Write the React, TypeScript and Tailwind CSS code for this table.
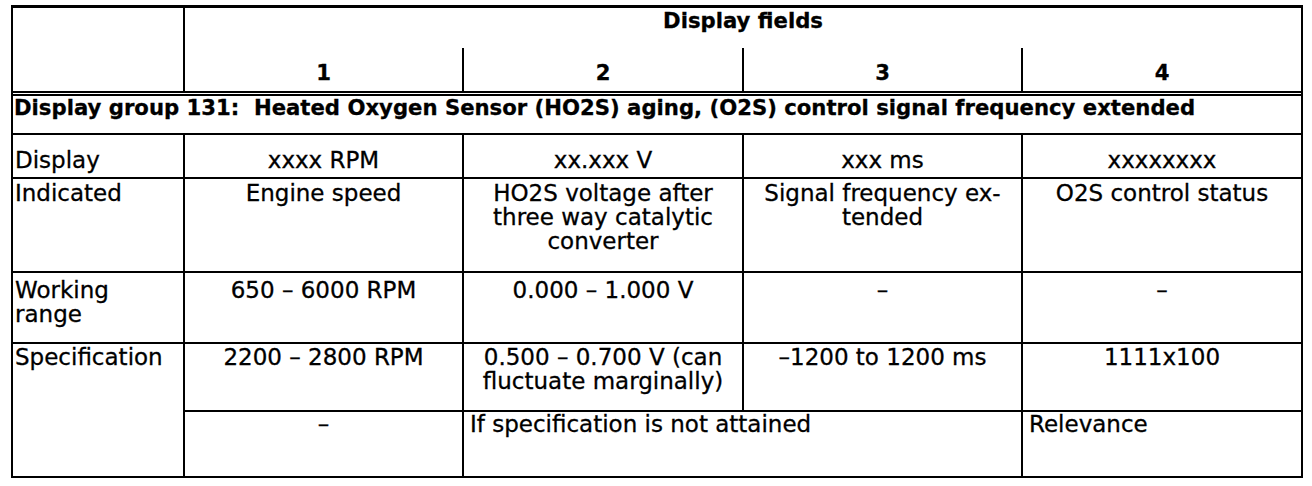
import type {ReactNode} from 'react'

const cell = 'bg-white text-black'

const Val = ({children, className = ''}: {children: ReactNode; className?: string}) => (
  <div className={`${cell} text-center ${className}`}>{children}</div>
)

export default function App() {
  return (
    <div className="w-[1312px] h-[486px] bg-white pt-[5px] pl-[11px] font-['DejaVu_Sans',sans-serif] text-[23px] leading-[24px] text-black [-webkit-text-stroke:0.3px_black]">
      <div className="w-[1292px] grid grid-cols-[170px_277px_278px_277px_278px] grid-rows-[83px_40px_42px_92px_69px_66px_64px] gap-[2px] bg-black border-2 border-t-[3px] border-black">
        {/* header */}
        <div className={cell} />
        <div className="col-span-4 flex flex-col font-bold text-[21.2px]">
          <div className="h-[40px] bg-white pt-[1px] text-center">Display fields</div>
          <div className="flex-1 grid grid-cols-[277px_278px_277px_278px] gap-x-[2px] bg-black">
            {['1', '2', '3', '4'].map(n => (
              <div key={n} className="bg-white text-center pt-[13px]">
                {n}
              </div>
            ))}
          </div>
        </div>

        {/* display group title */}
        <div className="col-span-5 bg-white pt-[3px] pl-[1px] font-bold text-[21.2px] whitespace-pre shadow-[inset_0_1px_0_white,inset_0_3px_0_black]">
          Display group 131:  Heated Oxygen Sensor (HO2S) aging, (O2S) control signal frequency extended
        </div>

        {/* Display */}
        <div className={`${cell} pl-[2px] pt-[13px]`}>Display</div>
        <Val className="pt-[13px]">xxxx RPM</Val>
        <Val className="pt-[13px]">xx.xxx V</Val>
        <Val className="pt-[13px]">xxx ms</Val>
        <Val className="pt-[13px]">xxxxxxxx</Val>

        {/* Indicated */}
        <div className={`${cell} pl-[2px] pt-[2px]`}>Indicated</div>
        <Val className="pt-[2px]">Engine speed</Val>
        <Val className="pt-[2px]">
          HO2S voltage after
          <br />
          three way catalytic
          <br />
          converter
        </Val>
        <Val className="pt-[2px]">
          Signal frequency ex-
          <br />
          tended
        </Val>
        <Val className="pt-[2px]">O2S control status</Val>

        {/* Working range */}
        <div className={`${cell} pl-[2px] pt-[5px]`}>
          Working
          <br />
          range
        </div>
        <Val className="pt-[5px]">650 – 6000 RPM</Val>
        <Val className="pt-[5px]">0.000 – 1.000 V</Val>
        <Val className="pt-[5px]">–</Val>
        <Val className="pt-[5px]">–</Val>

        {/* Specification */}
        <div className={`${cell} row-span-2 pl-[2px] pt-[1px]`}>Specification</div>
        <Val className="pt-[1px]">2200 – 2800 RPM</Val>
        <Val className="pt-[1px]">
          0.500 – 0.700 V (can
          <br />
          fluctuate marginally)
        </Val>
        <Val className="pt-[1px]">–1200 to 1200 ms</Val>
        <Val className="pt-[1px]">1111x100</Val>

        {/* last row */}
        <Val>–</Val>
        <div className={`${cell} col-span-2 pl-[6px]`}>If specification is not attained</div>
        <div className={`${cell} pl-[6px]`}>Relevance</div>
      </div>
    </div>
  )
}
